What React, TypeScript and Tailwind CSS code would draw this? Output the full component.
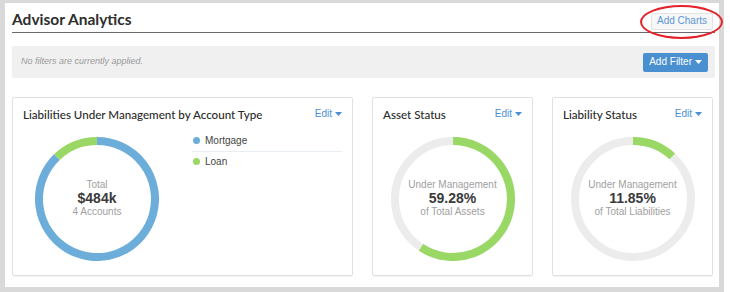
const BLUE = "#6cadd9";
const GREEN = "#9ad866";

function pt(cx: number, cy: number, r: number, deg: number) {
  const a = (deg * Math.PI) / 180;
  return [cx + r * Math.sin(a), cy - r * Math.cos(a)];
}

function arc(cx: number, cy: number, r: number, from: number, to: number) {
  const [x1, y1] = pt(cx, cy, r, from);
  const [x2, y2] = pt(cx, cy, r, to);
  const large = to - from > 180 ? 1 : 0;
  return `M ${x1} ${y1} A ${r} ${r} 0 ${large} 1 ${x2} ${y2}`;
}

function Caret({ className = "" }: { className?: string }) {
  return (
    <svg width="7" height="4" viewBox="0 0 7 4" className={className}>
      <path d="M0 0 L7 0 L3.5 4 Z" fill="currentColor" />
    </svg>
  );
}

function Edit() {
  return (
    <button className="flex items-center gap-[3px] text-[10px] leading-none text-[#4a8fd6] font-['Liberation_Sans',sans-serif] mt-[1px]">
      Edit <Caret />
    </button>
  );
}

function Donut({
  segments,
  track,
  children,
}: {
  segments: { from: number; to: number; color: string }[];
  track?: string;
  children: React.ReactNode;
}) {
  return (
    <div className="relative w-[124px] h-[124px]">
      <svg width="124" height="124" viewBox="0 0 124 124" className="absolute inset-0">
        {track && <circle cx="62" cy="62" r="58" fill="none" stroke={track} strokeWidth="8" />}
        {segments.map((s, i) =>
          s.to - s.from >= 360 ? (
            <circle key={i} cx="62" cy="62" r="58" fill="none" stroke={s.color} strokeWidth="8" />
          ) : (
            <path key={i} d={arc(62, 62, 58, s.from, s.to)} fill="none" stroke={s.color} strokeWidth="8" />
          )
        )}
      </svg>
      <div className="absolute inset-0 flex flex-col items-center justify-center font-['Liberation_Sans',sans-serif]">
        {children}
      </div>
    </div>
  );
}

function CardHead({ title }: { title: string }) {
  return (
    <div className="flex items-start justify-between">
      <h2 className="text-[11.6px] leading-none text-[#2a2a2a] font-['Lato',sans-serif] font-medium mt-[1px]">{title}</h2>
      <Edit />
    </div>
  );
}

function StatCard({ title, pct, sub }: { title: string; pct: number; sub: string }) {
  return (
    <div className="w-[161px] h-[179px] border border-[#e2e2e2] rounded-[2px] shadow-[0_1px_1px_rgba(0,0,0,0.05)] pl-[10px] pr-[10px] pt-[10px]">
      <CardHead title={title} />
      <div className="flex justify-center mt-[16px]">
        <Donut track="#ececec" segments={[{ from: 0, to: pct * 3.6, color: GREEN }]}>
          <span className="text-[10px] leading-[12px] text-[#a0a0a0]">Under Management</span>
          <span className="text-[14px] leading-[15px] font-bold text-[#3a3a3a]">{pct}%</span>
          <span className="text-[10px] leading-[12px] text-[#a0a0a0]">{sub}</span>
        </Donut>
      </div>
    </div>
  );
}

export default function App() {
  return (
    <div className="w-[730px] h-[292px] bg-white">
      <div className="w-[724px] h-[292px] border-l-[5px] border-r-[5px] border-t-[3px] border-b-[5px] border-[#d9d9d9] pl-[7px] pr-[4px]">
        <div className="relative flex items-center justify-between h-[30px] border-b border-[#6a6a6a]">
          <h1 className="text-[15.5px] leading-none font-bold text-[#2e2e2e] font-['Lato',sans-serif] mt-[4px]">
            Advisor Analytics
          </h1>
          <button className="mr-[2px] mt-[7px] h-[17px] px-[5px] bg-[#f7f7f7] border border-[#e3e3e3] rounded-[2px] text-[10px] leading-none text-[#5b95d6] font-['Liberation_Sans',sans-serif]">
            Add Charts
          </button>
          <div className="absolute right-[-8px] top-[2px] w-[83px] h-[34px] rounded-[50%] border-2 border-[#e3222b]" />
        </div>

        <div className="mt-[13px] h-[32px] bg-[#f0f0f0] rounded-[2px] flex items-center justify-between pl-[9px] pr-[7px]">
          <span className="text-[9px] italic text-[#9a9a9a] font-['Liberation_Sans',sans-serif]">
            No filters are currently applied.
          </span>
          <button className="flex items-center gap-[3px] h-[19px] px-[6px] bg-[#4a8fcf] rounded-[2px] text-white text-[10px] leading-none font-['Liberation_Sans',sans-serif]">
            Add Filter <Caret />
          </button>
        </div>

        <div className="mt-[19px] flex gap-[19px]">
          <div className="w-[341px] h-[179px] border border-[#e2e2e2] rounded-[2px] shadow-[0_1px_1px_rgba(0,0,0,0.05)] pl-[10px] pr-[10px] pt-[10px]">
            <CardHead title="Liabilities Under Management by Account Type" />
            <div className="flex mt-[16px]">
              <div className="ml-[12px]">
                <Donut
                  segments={[
                    { from: 0, to: 316.4, color: BLUE },
                    { from: 316.4, to: 360, color: GREEN },
                  ]}
                >
                  <span className="text-[10px] leading-[12px] text-[#a0a0a0]">Total</span>
                  <span className="text-[14px] leading-[15px] font-bold text-[#3a3a3a]">$484k</span>
                  <span className="text-[10px] leading-[12px] text-[#a0a0a0]">4 Accounts</span>
                </Donut>
              </div>
              <div className="ml-[33px] flex-1 -mt-[6px] font-['Liberation_Sans',sans-serif] text-[10px] text-[#444]">
                <div className="flex items-center gap-[5px] h-[21px] border-b border-[#e8eef3] pl-[1px]">
                  <span className="w-[7px] h-[7px] rounded-full" style={{ background: BLUE }} />
                  Mortgage
                </div>
                <div className="flex items-center gap-[5px] h-[20px] pl-[1px]">
                  <span className="w-[7px] h-[7px] rounded-full" style={{ background: GREEN }} />
                  Loan
                </div>
              </div>
            </div>
          </div>
          <StatCard title="Asset Status" pct={59.28} sub="of Total Assets" />
          <StatCard title="Liability Status" pct={11.85} sub="of Total Liabilities" />
        </div>
      </div>
    </div>
  );
}
